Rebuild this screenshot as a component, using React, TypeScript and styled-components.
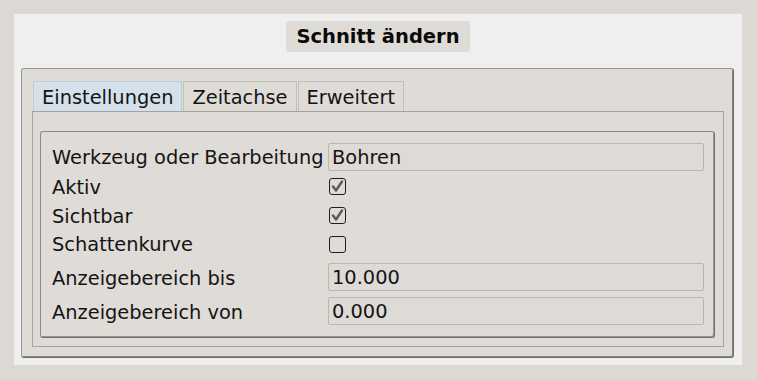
import { createGlobalStyle } from 'styled-components'
import styled from 'styled-components'

const GlobalStyle = createGlobalStyle`
  html, body {
    margin: 0;
    padding: 0;
    background: #dcd8d4;
  }
  body {
    font-family: 'DejaVu Sans', 'Noto Sans', sans-serif;
    color: #141414;
  }
`

interface Field {
  label: string
  kind: 'text' | 'check'
  value?: string
  checked?: boolean
  h: number
  mt?: number
}

const fields: Field[] = [
  { label: 'Werkzeug oder Bearbeitung', kind: 'text', value: 'Bohren', h: 29 },
  { label: 'Aktiv', kind: 'check', checked: true, h: 30 },
  { label: 'Sichtbar', kind: 'check', checked: true, h: 28 },
  { label: 'Schattenkurve', kind: 'check', checked: false, h: 29 },
  { label: 'Anzeigebereich bis', kind: 'text', value: '10.000', h: 28, mt: 5 },
  { label: 'Anzeigebereich von', kind: 'text', value: '0.000', h: 28, mt: 6 },
]

const tabs = ['Einstellungen', 'Zeitachse', 'Erweitert']

function CheckBox({ checked }: { checked?: boolean }) {
  return (
    <Box>
      {checked && (
        <svg width="13" height="13" viewBox="0 0 13 13">
          <path
            d="M2 6.5 L5 10.5 L11 1.5"
            fill="none"
            stroke="#5a5a5a"
            strokeWidth="2.4"
            strokeLinecap="round"
            strokeLinejoin="round"
          />
        </svg>
      )}
    </Box>
  )
}

export default function App() {
  return (
    <>
      <GlobalStyle />
      <Page>
        <Dialog>
          <TitleRow>
            <Title>Schnitt ändern</Title>
          </TitleRow>
          <Frame>
            <TabBar>
              {tabs.map((t, i) => (
                <Tab key={t} $active={i === 0}>
                  {t}
                </Tab>
              ))}
            </TabBar>
            <TabPane>
              <GroupBox>
                {fields.map((f) => (
                  <FormRow key={f.label} $h={f.h} $mt={f.mt ?? 0}>
                    <Label>{f.label}</Label>
                    {f.kind === 'text' ? (
                      <Input>{f.value}</Input>
                    ) : (
                      <CheckCell>
                        <CheckBox checked={f.checked} />
                      </CheckCell>
                    )}
                  </FormRow>
                ))}
              </GroupBox>
            </TabPane>
          </Frame>
        </Dialog>
      </Page>
    </>
  )
}

// ページ全体
const Page = styled.div`
  padding: 14px 15px 15px 14px;
  width: 757px;
  height: 380px;
  box-sizing: border-box;
`

// ダイアログ本体
const Dialog = styled.div`
  background: #efefef;
  height: 100%;
  padding: 7px 8px 7px 7px;
  box-sizing: border-box;
  display: flex;
  flex-direction: column;
`

const TitleRow = styled.div`
  display: flex;
  justify-content: center;
  padding-left: 1px;
`

const Title = styled.div`
  height: 31px;
  padding: 0 10px;
  display: flex;
  align-items: center;
  background: #dfdbd7;
  border-radius: 3px;
  font-weight: bold;
  font-size: 19.5px;
  color: #0a0a0a;
`

// タブを囲む枠
const Frame = styled.div`
  margin-top: 16px;
  flex: 1;
  background: #dfdbd7;
  border: 1px solid #9a9693;
  border-right-color: #6f6c69;
  border-bottom-color: #6f6c69;
  box-shadow: inset -1px -1px 0 #8a8784;
  border-radius: 3px;
  padding: 12px 9px 10px 10px;
  display: flex;
  flex-direction: column;
`

const TabBar = styled.div`
  display: flex;
  height: 30px;
`

const Tab = styled.div<{ $active?: boolean }>`
  height: 30px;
  box-sizing: border-box;
  padding: 1px 8px 0 8px;
  margin-right: 1px;
  display: flex;
  align-items: center;
  font-size: 19.4px;
  border: 1px solid ${(p) => (p.$active ? '#c2ccd4' : '#c4c0bc')};
  border-bottom: none;
  background: ${(p) => (p.$active ? '#d5e1ea' : '#dfdbd7')};
  color: #141414;
  &:first-child {
    margin-left: 1px;
  }
`

const TabPane = styled.div`
  flex: 1;
  border: 1px solid #a5a29f;
  padding: 19px 8px 8px 7px;
  display: flex;
  flex-direction: column;
`

// 入力欄のグループ
const GroupBox = styled.div`
  flex: 1;
  border: 1px solid #8d8a87;
  border-right-color: #6f6c69;
  border-bottom-color: #6f6c69;
  box-shadow: inset -1px -1px 0 #9a9794;
  border-radius: 3px;
  padding: 10px 10px 12px 10px;
  display: flex;
  flex-direction: column;
`

const FormRow = styled.div<{ $h: number; $mt: number }>`
  display: grid;
  grid-template-columns: 277px 1fr;
  height: ${(p) => p.$h}px;
  margin-top: ${(p) => p.$mt}px;
  align-items: center;
`

const Label = styled.div`
  font-size: 19.4px;
  padding: 2px 0 0 1px;
  white-space: nowrap;
`

const Input = styled.div`
  height: 28px;
  box-sizing: border-box;
  border: 1px solid #bab6b2;
  border-radius: 2px;
  background: #dedad6;
  font-size: 19.4px;
  padding: 1px 3px 0;
  display: flex;
  align-items: center;
`

const CheckCell = styled.div`
  display: flex;
  align-items: center;
  padding: 1px 0 0 1px;
`

const Box = styled.div`
  width: 17px;
  height: 17px;
  box-sizing: border-box;
  border: 1.5px solid #1e1e1e;
  border-radius: 3px;
  background: #dfdbd7;
  display: flex;
  align-items: center;
  justify-content: center;
`
